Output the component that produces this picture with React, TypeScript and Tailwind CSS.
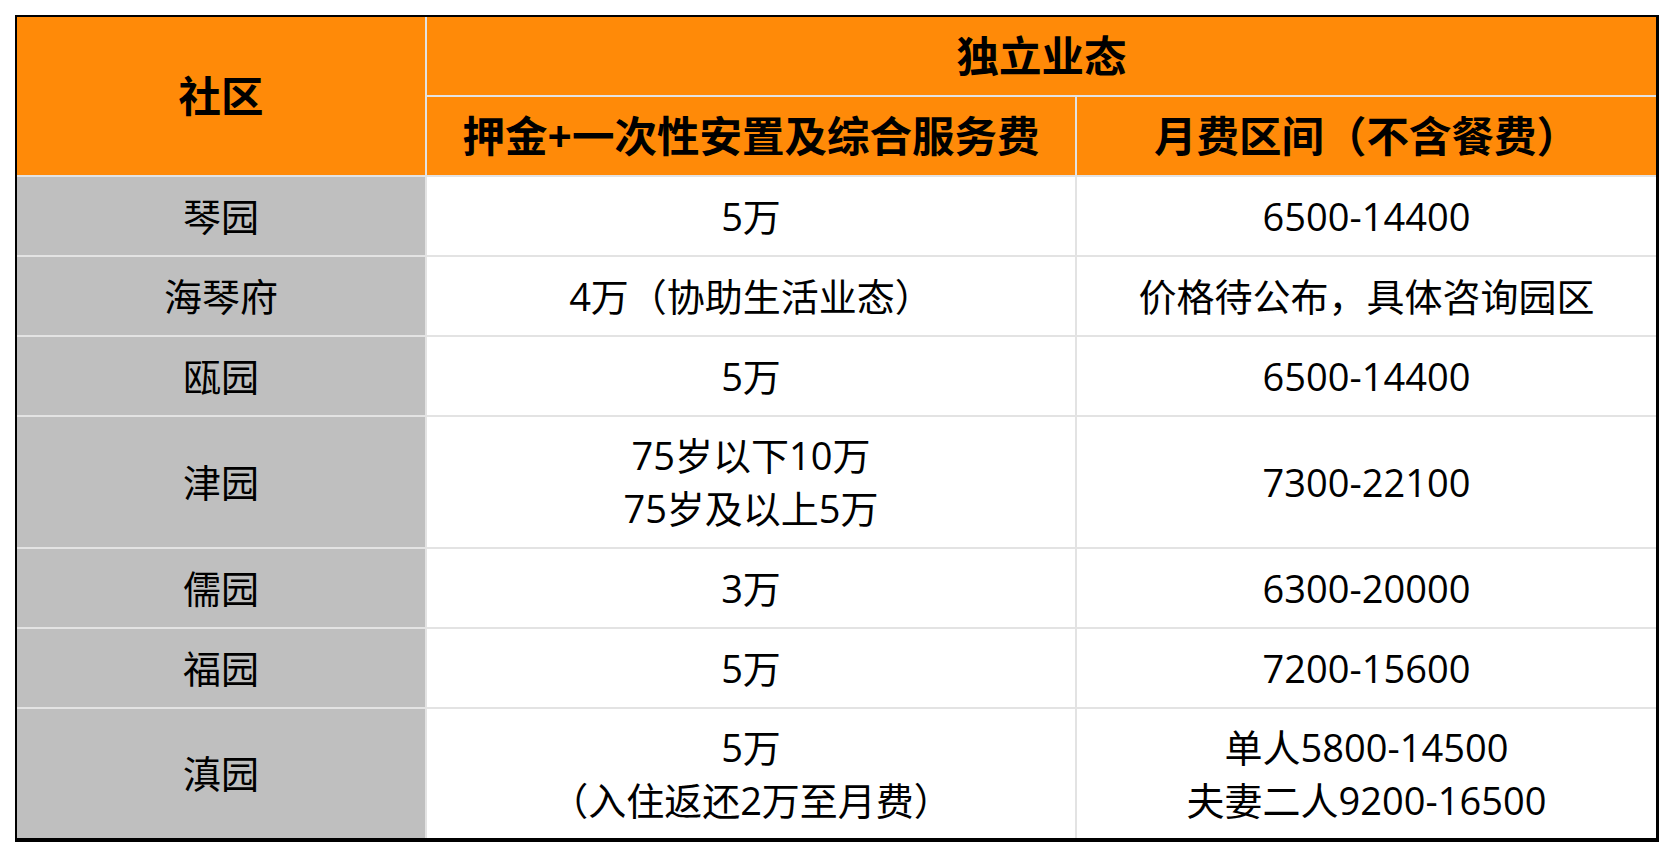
import * as React from "react"

const rows = [
  { name: "琴园", deposit: ["5万"], fee: ["6500-14400"] },
  { name: "海琴府", deposit: ["4万（协助生活业态）"], fee: ["价格待公布，具体咨询园区"] },
  { name: "瓯园", deposit: ["5万"], fee: ["6500-14400"] },
  { name: "津园", deposit: ["75岁以下10万", "75岁及以上5万"], fee: ["7300-22100"] },
  { name: "儒园", deposit: ["3万"], fee: ["6300-20000"] },
  { name: "福园", deposit: ["5万"], fee: ["7200-15600"] },
  { name: "滇园", deposit: ["5万", "（入住返还2万至月费）"], fee: ["单人5800-14500", "夫妻二人9200-16500"] },
]

const font = { fontFamily: '"Open Sans", "Noto Sans CJK SC", sans-serif' }

function Lines({ lines }: { lines: string[] }) {
  return (
    <div className="flex flex-col items-center leading-[53px]">
      {lines.map((l) => (
        <span key={l}>{l}</span>
      ))}
    </div>
  )
}

export default function App() {
  return (
    <div className="w-[1674px] h-[856px] bg-white pt-[15px] pl-[15px]" style={font}>
      <div className="w-[1644px] border-l-2 border-t-2 border-r-[3px] border-b-4 border-black bg-[#e3e3e3]">
        <div className="grid grid-cols-[408px_648px_1fr] grid-rows-[78px_78px_78px_78px_78px_130px_78px_78px_129px] gap-[2px] text-black">
          {/* header */}
          <div className="row-span-2 bg-[#ff8a08] flex items-center justify-center text-[42.5px] font-bold">社区</div>
          <div className="col-span-2 bg-[#ff8a08] flex items-center justify-center text-[42.5px] font-bold">独立业态</div>
          <div className="bg-[#ff8a08] flex items-center justify-center text-[42.5px] font-bold">押金+一次性安置及综合服务费</div>
          <div className="bg-[#ff8a08] flex items-center justify-center text-[42.5px] font-bold">月费区间（不含餐费）</div>

          {rows.map((r) => (
            <React.Fragment key={r.name}>
              <div className="bg-[#bfbfbf] flex items-center justify-center text-[38px]">{r.name}</div>
              <div className="bg-white flex items-center justify-center text-[38px]">
                <Lines lines={r.deposit} />
              </div>
              <div className="bg-white flex items-center justify-center text-[38px]">
                <Lines lines={r.fee} />
              </div>
            </React.Fragment>
          ))}
        </div>
      </div>
    </div>
  )
}
